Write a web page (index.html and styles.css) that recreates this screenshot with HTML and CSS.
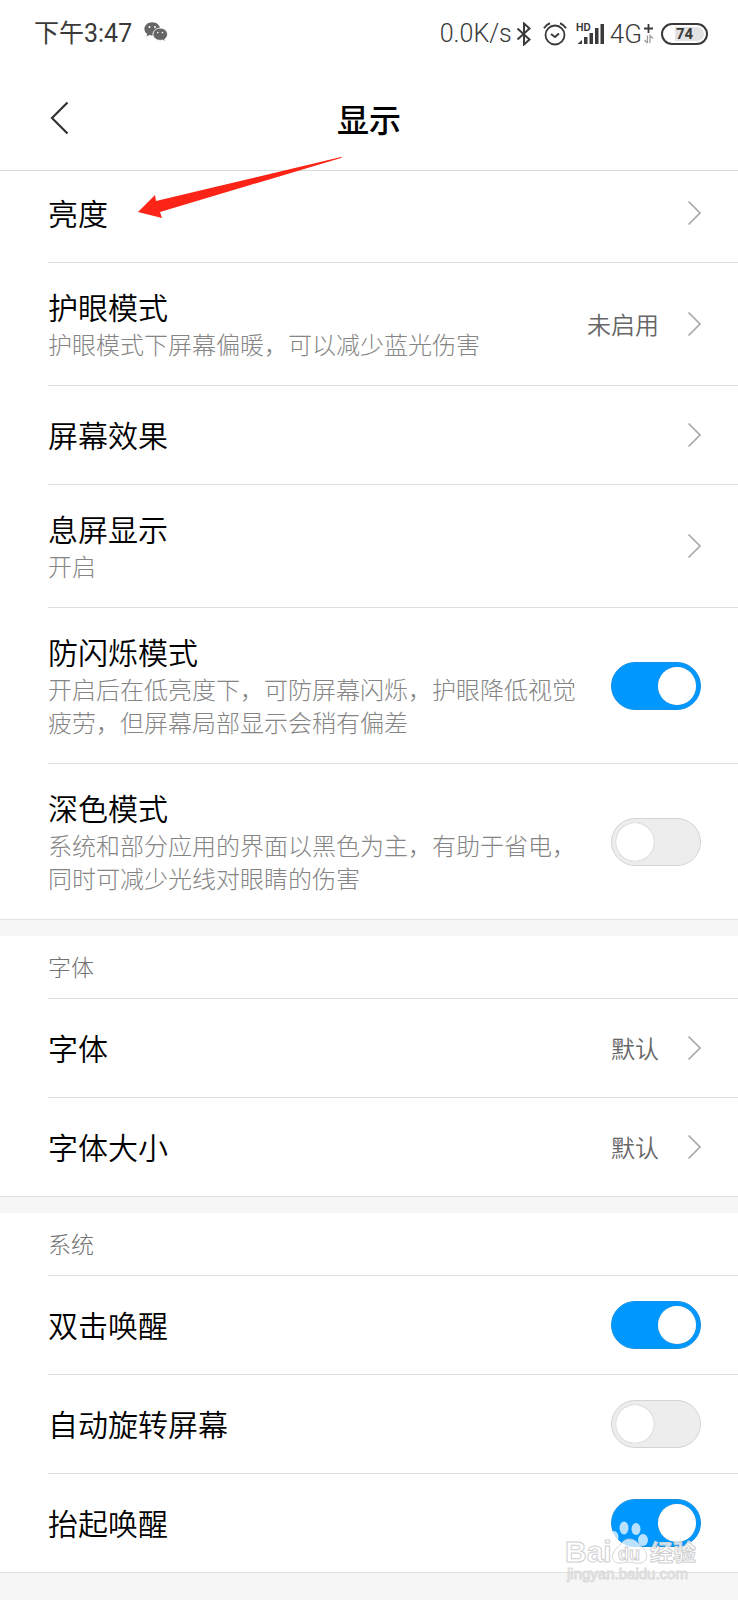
FILE: index.html
```html
<!DOCTYPE html>
<html lang="zh-CN">
<head>
<meta charset="utf-8">
<meta name="viewport" content="width=device-width, initial-scale=1">
<title>显示</title>
<link rel="stylesheet" href="styles.css">
</head>
<body>
<svg class="defs" width="0" height="0" aria-hidden="true">
  <symbol id="chevron" viewBox="0 0 14 26"><path d="M1.500 1.500 13 13 1.500 24.500" fill="none" stroke="currentColor" stroke-width="1.700"/></symbol>
</svg>
<div class="page">
  <div class="status">
    <span class="clock">下午3:47</span>
    <svg class="wechat" width="24" height="20" viewBox="0 0 24 20" aria-hidden="true">
      <path d="M8.200.3C3.800.3.400 3.200.4 6.900c0 2.100 1.100 3.900 2.800 5.100l-.7 2.600 2.900-1.500c1 .3 1.900.4 2.900.4 4.300 0 7.800-2.900 7.800-6.600S12.600.3 8.200.3z" fill="#666"/>
      <path d="M16.200 6.100c-4 0-7.200 2.700-7.200 6.100s3.200 6.200 7.200 6.200c.8 0 1.700-.1 2.400-.3l2.700 1.400-.6-2.300c1.700-1.100 2.800-2.900 2.800-5 0-3.400-3.300-6.100-7.300-6.100z" fill="#666" stroke="#fff" stroke-width=".9"/>
      <g fill="#fff"><circle cx="5.500" cy="5" r="1"/><circle cx="11" cy="5" r="1"/><circle cx="13.800" cy="10.600" r=".8"/><circle cx="18.500" cy="10.600" r=".8"/></g>
    </svg>
    <span class="speed">0.0K/s</span>
    <svg class="bluetooth" width="16" height="24" viewBox="0 0 16 24" aria-hidden="true"><path d="M1.500 6.500 13.500 17.500 8 22.500V1.500L13.500 6.500 1.500 17.500" fill="none" stroke="#3a3a3a" stroke-width="2"/></svg>
    <svg class="alarm" width="24" height="24" viewBox="0 0 24 24" aria-hidden="true"><g fill="none" stroke="#3a3a3a" stroke-width="1.800"><circle cx="12" cy="13" r="9.500"/><path d="M8 12l4 3 4-3.500M1 6.300Q3 2.800 7 1.300M23 6.300Q21 2.800 17 1.300" stroke-width="2"/></g></svg>
    <svg class="signal" width="29" height="24" viewBox="0 0 29 24" aria-hidden="true">
      <text x="0" y="9" class="hd">HD</text>
      <path d="M1.500 22 6 18v4zM8 15h3.500v7H8zM13.500 11H17v11h-3.500zM19 6h3.500v16H19zM24.500 2H28v20h-3.500z" fill="#3a3a3a"/>
    </svg>
    <span class="net">4G</span>
    <svg class="plus" width="10" height="22" viewBox="0 0 10 22" aria-hidden="true"><path d="M0 5.500h9M4.500 1v9" stroke="#3a3a3a" stroke-width="1.800"/><path d="M3.500 12.500V20M.5 17l3 3M6 20v-7.500l3 3" fill="none" stroke="#999" stroke-width="1.200"/></svg>
    <span class="battery"><span>74</span></span>
  </div>

  <header class="bar">
    <button class="back" aria-label="返回"><svg width="20" height="34" viewBox="0 0 20 34"><path d="M17.500 1.500 2 17l15.500 15.500" fill="none" stroke="#333" stroke-width="2.200"/></svg></button>
    <h1>显示</h1>
  </header>

  <main>
    <section class="group">
      <a class="row first" href="#"><span class="text"><span class="name">亮度</span></span><svg class="chev"><use href="#chevron"/></svg></a>
      <a class="row" href="#"><span class="text"><span class="name">护眼模式</span><span class="desc">护眼模式下屏幕偏暖，可以减少蓝光伤害</span></span><span class="value">未启用</span><svg class="chev"><use href="#chevron"/></svg></a>
      <a class="row" href="#"><span class="text"><span class="name">屏幕效果</span></span><svg class="chev"><use href="#chevron"/></svg></a>
      <a class="row" href="#"><span class="text"><span class="name">息屏显示</span><span class="desc">开启</span></span><svg class="chev"><use href="#chevron"/></svg></a>
      <label class="row"><span class="text"><span class="name">防闪烁模式</span><span class="desc">开启后在低亮度下，可防屏幕闪烁，护眼降低视觉疲劳，但屏幕局部显示会稍有偏差</span></span><input class="switch" type="checkbox" checked></label>
      <label class="row last"><span class="text"><span class="name">深色模式</span><span class="desc">系统和部分应用的界面以黑色为主，有助于省电，同时可减少光线对眼睛的伤害</span></span><input class="switch" type="checkbox"></label>
    </section>

    <section class="group">
      <h2>字体</h2>
      <a class="row" href="#"><span class="text"><span class="name">字体</span></span><span class="value">默认</span><svg class="chev"><use href="#chevron"/></svg></a>
      <a class="row last" href="#"><span class="text"><span class="name">字体大小</span></span><span class="value">默认</span><svg class="chev"><use href="#chevron"/></svg></a>
    </section>

    <section class="group">
      <h2>系统</h2>
      <label class="row"><span class="text"><span class="name">双击唤醒</span></span><input class="switch" type="checkbox" checked></label>
      <label class="row"><span class="text"><span class="name">自动旋转屏幕</span></span><input class="switch" type="checkbox"></label>
      <label class="row last"><span class="text"><span class="name">抬起唤醒</span></span><input class="switch" type="checkbox" checked></label>
      <svg class="watermark" width="140" height="70" viewBox="0 0 140 70" aria-hidden="true">
        <g fill="#fff" fill-opacity=".72">
          <ellipse cx="60" cy="10" rx="4.500" ry="6.500"/><ellipse cx="72" cy="11" rx="4.500" ry="6"/><ellipse cx="50" cy="19" rx="4.500" ry="6"/><ellipse cx="79" cy="22" rx="5" ry="6"/>
          <path d="M65 21c-5 0-7 4-11 8-7 6-8 14 0 16 4 .5 7-1 11-1s7 2 12 1c8-2 7-11 1-16-4-4-7-8-13-8z" stroke="#ccc" stroke-width=".8"/>
        </g>
        <text class="wm wm-brand" x="1" y="44">Bai</text>
        <text class="wm wm-du" x="54" y="42">du</text>
        <text class="wm wm-cn" x="86" y="43">经验</text>
        <text class="wm wm-url" x="3" y="61">jingyan.baidu.com</text>
      </svg>
    </section>
  </main>

  <svg class="pointer" width="206" height="64" viewBox="0 0 206 64" aria-hidden="true"><path d="M1 57 18 40 19 46 204 2Q206 1 204 3L23 57 25 63Z" fill="#fb2416"/></svg>
</div>
</body>
</html>
```
FILE: styles.css
```css
* { box-sizing: border-box; }

body {
  margin: 0;
  background: #f6f6f6;
  color: #000;
  font-family: "Noto Sans CJK SC", "Noto Sans", sans-serif;
  font-weight: 350;
}

.page {
  position: relative;
  min-height: 100vh;
}
.defs { position: absolute; }

.status {
  display: flex;
  align-items: center;
  height: 68px;
  padding: 0 30px 0 34px;
  background: #fff;
  color: #3a3a3a;
  font-family: Roboto, "Noto Sans CJK SC", sans-serif;
  font-size: 25px;
  line-height: 32px;
}
.clock { font-weight: 400; }
.wechat { margin: 0 auto 4px 12px; }
.bluetooth { margin-left: 4px; }
.alarm { margin-left: 11px; }
.signal { margin-left: 9px; }
.hd { font: 700 10px Inter, sans-serif; fill: #3a3a3a; }
.net { margin-left: 5px; font-size: 26px; }
.plus { margin-left: 2px; }
.battery {
  width: 47px;
  height: 22px;
  margin-left: 7px;
  padding: 2px;
  border: 2px solid #3a3a3a;
  border-radius: 11px;
  font-size: 15px;
  font-weight: 700;
  line-height: 15px;
  text-align: center;
}
.battery span {
  display: block;
  height: 14px;
  margin-left: 10px;
  padding-right: 10px;
  border-radius: 0 7px 7px 0;
  background: #e2e2e2;
}

.bar {
  display: grid;
  grid-template-columns: 1fr auto 1fr;
  align-items: center;
  height: 103px;
  padding: 0 50px 2px;
  border-bottom: 1px solid #d8d8d8;
  background: #fff;
}
.bar h1 {
  margin: 0;
  font-size: 32px;
  font-weight: 500;
  line-height: 40px;
}
.back {
  justify-self: start;
  display: flex;
  padding: 0;
  border: 0;
  background: none;
}

.group {
  position: relative;
  padding-left: 48px;
  border-bottom: 1px solid #e2e2e2;
  background: #fff;
}
.group + .group { margin-top: 16px; }
.group h2 {
  height: 63px;
  margin: 0;
  border-bottom: 1px solid #e0e0e0;
  color: #737373;
  font-size: 23px;
  font-weight: 300;
  line-height: 61px;
}

.row {
  display: flex;
  align-items: center;
  min-height: 99px;
  padding: 23px 37px 23px 0;
  border-bottom: 1px solid #e0e0e0;
  color: inherit;
  text-decoration: none;
}
.row.last { min-height: 98px; border-bottom: 0; }
.row.first { min-height: 92px; padding-top: 16px; }
.text { flex: 1; padding-bottom: 2px; }
.name {
  display: block;
  font-size: 30px;
  line-height: 40px;
}
.desc {
  display: block;
  margin-top: 1px;
  color: #858585;
  font-size: 24px;
  font-weight: 300;
  line-height: 33px;
}
.value {
  padding-bottom: 2px;
  color: #666;
  font-size: 24px;
  line-height: 33px;
}
.chev {
  width: 14px;
  height: 26px;
  margin-left: 28px;
  color: #aaa;
}

.switch {
  flex: none;
  width: 90px;
  height: 48px;
  margin: 0 0 0 34px;
  padding: 4px;
  border: 1px solid #d4d4d4;
  border-radius: 24px;
  background: #ededed;
  appearance: none;
}
.switch::before {
  content: "";
  display: block;
  width: 38px;
  height: 38px;
  border-radius: 50%;
  background: #fff;
  box-shadow: 0 0 1px #999;
}
.switch:checked {
  border-color: #1490e6;
  background: #0098ff;
}
.switch:checked::before { margin-left: 42px; }

.watermark {
  position: absolute;
  right: 34px;
  bottom: -16px;
  overflow: visible;
}
.wm {
  fill: #fff;
  fill-opacity: .8;
  stroke: #d0d0d0;
  stroke-width: 1px;
  font-family: "Liberation Sans", "Noto Sans CJK SC", sans-serif;
  font-weight: 700;
}
.wm-brand { font-size: 30px; }
.wm-du { font-size: 18px; }
.wm-cn { font-size: 23px; }
.wm-url {
  fill: #e6e6e6;
  stroke: #dcdcdc;
  font-size: 15px;
  font-weight: 400;
}

.pointer {
  position: absolute;
  left: 137px;
  top: 155px;
}
```
